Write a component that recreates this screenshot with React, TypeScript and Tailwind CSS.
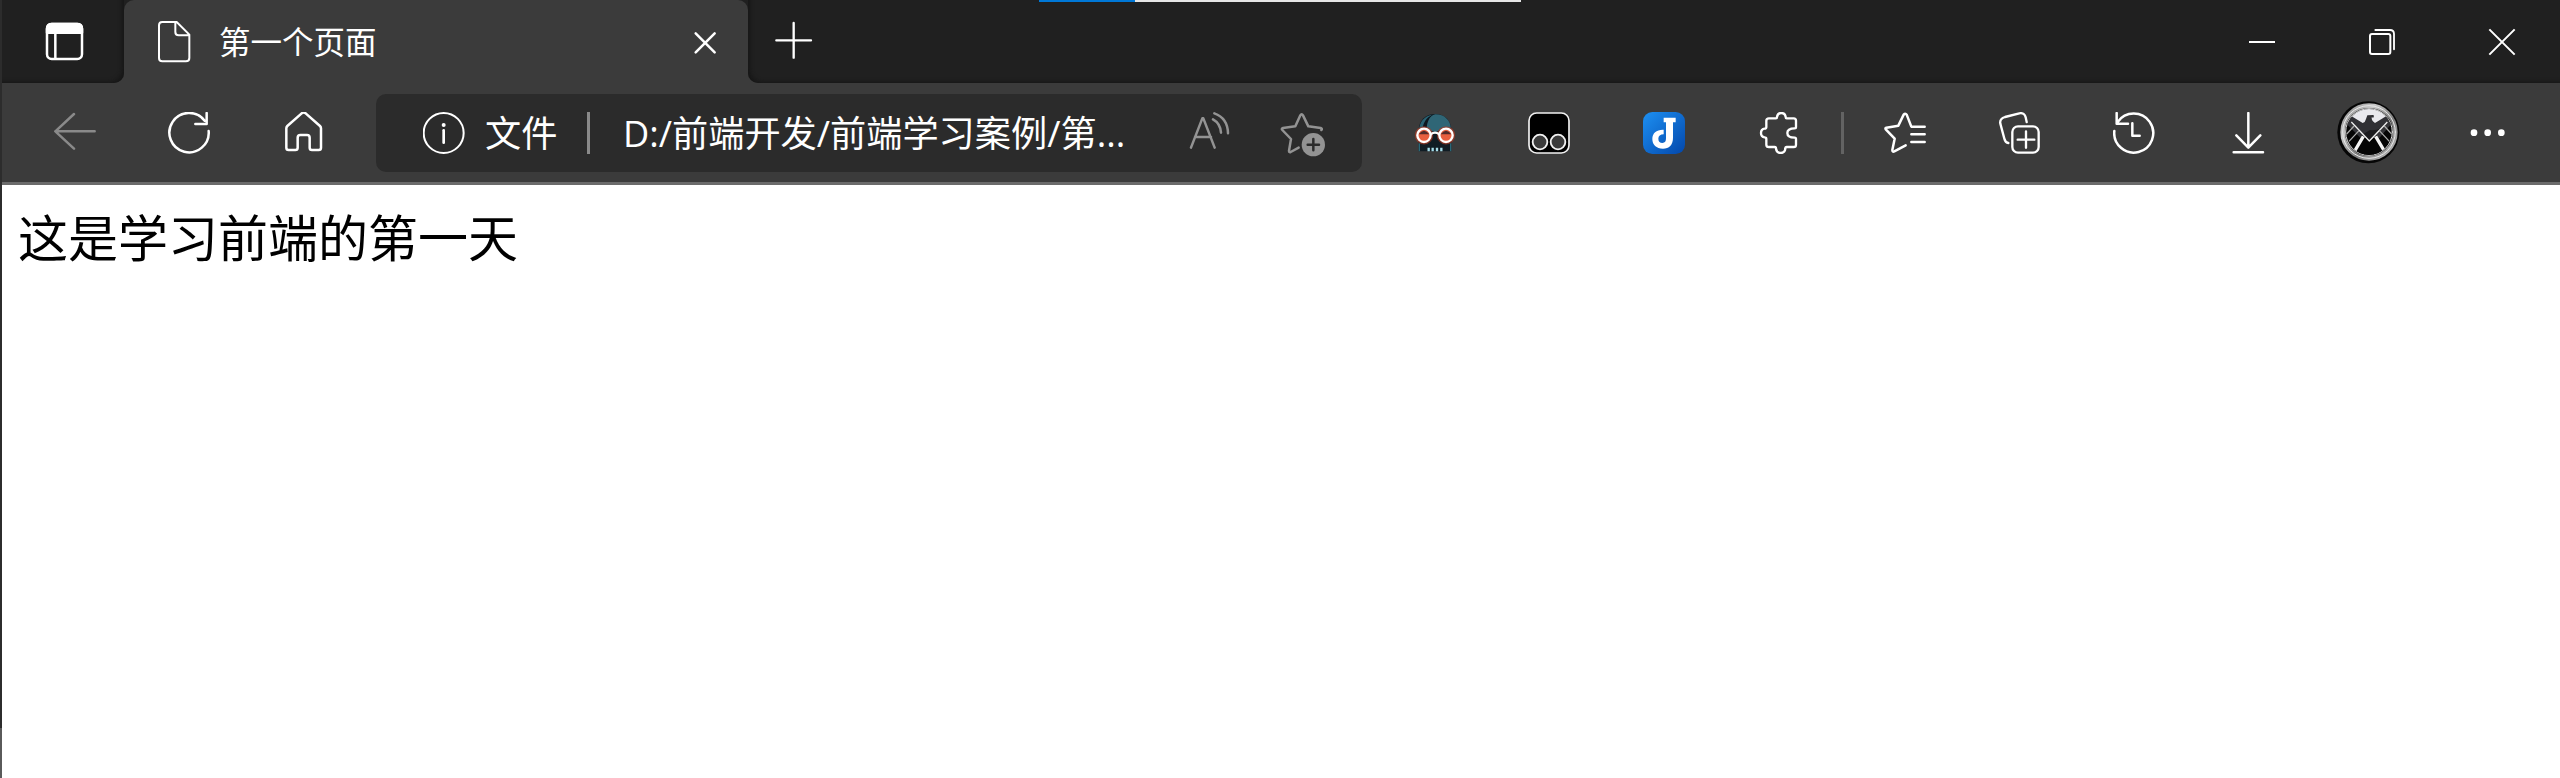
import type { ReactNode } from 'react';

type IconProps = {
  box: string;
  className?: string;
  children: ReactNode;
};

function Icon({ box, className = 'h-[42px] w-[42px] text-white', children }: IconProps) {
  return (
    <svg
      viewBox={box}
      className={`block ${className}`}
      fill="none"
      stroke="currentColor"
      strokeWidth={7.5}
      strokeLinecap="round"
      strokeLinejoin="round"
    >
      {children}
    </svg>
  );
}

function TabStrip() {
  return (
    <div className="flex h-[83px] bg-[#3b3b3b]">
      <div className="flex w-[122px] rounded-br-[10px] bg-[#202020] pt-[20px] pl-[42px] shadow-[inset_-4px_-3px_4px_-2px_#161616]">
        <Icon box="132 60 126 126">
          <rect x="141" y="72" width="105" height="105" rx="14" />
          <path d="M141 98V86q0-14 14-14h77q14 0 14 14v12z" fill="currentColor" />
          <path d="M166 100v76" />
        </Icon>
      </div>

      <div className="w-[624px] bg-linear-to-b from-[#202020] from-50% to-[#3b3b3b] to-50%">
        <div className="flex h-full items-start rounded-t-[10px] bg-[#3b3b3b] pt-[20px] pl-[32px]">
          <Icon box="468 60 108 129" className="h-[43px] w-[36px] text-white">
            <path
              strokeWidth={6}
              d="M487 66h43l38 38v70q0 10-10 10h-71q-10 0-10-10V76q0-10 10-10zM526 67v29q0 10 10 10h31"
            />
          </Icon>
          <div className="ml-[27px] w-[473px] font-['Noto_Sans_CJK_SC',sans-serif] text-[31.5px] leading-[40px] whitespace-nowrap text-white">
            第一个页面
          </div>
          <Icon box="876 90 78 78" className="mt-[10px] h-[26px] w-[26px] text-white">
            <path d="M887 100l57 57M944 100l-57 57" />
          </Icon>
        </div>
      </div>

      <div className="flex flex-1 items-start rounded-bl-[10px] bg-[#202020] pl-[27px] shadow-[inset_4px_-3px_4px_-2px_#161616]">
        <Icon box="1125 60 114 120" className="mt-[20px] h-[40px] w-[38px] text-white">
          <path d="M1129 121h104M1181 69v104" strokeWidth={7} />
        </Icon>
        <div className="ml-[226px] flex h-[2px] w-[482px] bg-[#e6e6e6]">
          <div className="w-[96px] bg-[#0078d7]" />
        </div>
        <div className="ml-auto flex items-center gap-[92px] pt-[28px] pr-[44px]">
          <Icon box="144 84 84 84" className="h-[28px] w-[28px] text-white">
            <path d="M147 126h78" strokeWidth={6} strokeLinecap="butt" />
          </Icon>
          <Icon box="501 84 84 84" className="h-[28px] w-[28px] text-white">
            <rect x="507" y="102" width="61" height="60" rx="6" strokeWidth={6} />
            <path d="M523 90h44q12 0 12 12v46" strokeWidth={5.5} />
          </Icon>
          <Icon box="861 84 84 84" className="h-[28px] w-[28px] text-white">
            <path d="M865 88l76 76M941 88l-76 76" strokeWidth={6} strokeLinecap="butt" />
          </Icon>
        </div>
      </div>
    </div>
  );
}

function AddressBar() {
  return (
    <div className="ml-[52px] flex h-[78px] w-[986px] items-center rounded-[10px] bg-[#2b2b2b] pl-[47px] font-['Open_Sans','Noto_Sans_CJK_SC',sans-serif] text-[36.2px] leading-[42px] text-white">
      <Icon box="69 336 126 126">
        <circle cx="131" cy="399" r="60" strokeWidth={6} />
        <path d="M131 391v37" strokeWidth={8} />
        <circle cx="131" cy="375" r="6" fill="currentColor" stroke="none" />
      </Icon>
      <div className="ml-[20px] w-[102px] whitespace-nowrap">文件</div>
      <div className="h-[42px] w-[3px] bg-[#8a8a8a]" />
      <div className="ml-[33px] w-[565px] whitespace-nowrap">D:/前端开发/前端学习案例/第...</div>
      <Icon box="144 336 126 126" className="h-[42px] w-[42px] text-[#939393]">
        <path d="M153 443l34-88h3l34 88M165 411h48M219 358q22 12 24 40M223 340q40 14 41 60" />
      </Icon>
      <Icon box="420 327 144 144" className="ml-[50px] h-[48px] w-[48px] text-[#939393]">
        <path d="M476 443l-24 13q-5 2-5-4l6-35-26-27q-4-4 2-6l37-5 15-33q4-7 8 0l16 33 37 5q6 2 2 6" />
        <circle cx="520" cy="434" r="35" fill="currentColor" stroke="none" />
        <path d="M503 434h34M520 417v34" stroke="#2b2b2b" />
      </Icon>
    </div>
  );
}

function SkullIcon() {
  return (
    <Icon box="132 96 126 126" className="ml-[52px] h-[42px] w-[42px] text-white">
      <path d="M146 214v-62c0-32 22-50 49-50s49 18 49 50v62z" fill="#101c24" stroke="none" />
      <path d="M166 150c0-26 12-42 30-47 28 0 46 18 47 45l-20-6-24 14z" fill="#2f6676" stroke="none" />
      <path d="M148 150c0-26 16-42 38-46-16 12-20 24-24 40z" fill="#2a6272" stroke="none" />
      <path d="M158 148c1-20 12-36 28-42-12 12-15 26-16 40z" fill="#0d1820" stroke="none" />
      <path d="M148 190v24M242 190v24" stroke="#2a6878" strokeWidth={4} strokeLinecap="butt" />
      <g stroke="#b33a22" strokeWidth={13} opacity={0.65}>
        <circle cx="162" cy="166" r="21" />
        <circle cx="228" cy="166" r="21" />
      </g>
      <circle cx="162" cy="166" r="20" fill="#e8603f" strokeWidth={7} />
      <circle cx="228" cy="166" r="20" fill="#e8603f" strokeWidth={7} />
      <path d="M146 163q16-22 32 0zM212 163q16-22 32 0z" fill="#542c2a" stroke="none" />
      <path d="M183 162q12-8 24 0" strokeWidth={7} />
      <path d="M176 203v11M188 203v11M201 203v11M214 203v11" stroke="#a5dce8" strokeWidth={7} strokeLinecap="butt" />
    </Icon>
  );
}

function AvatarIcon() {
  return (
    <Icon box="411 303 192 192" className="ml-[68px] h-[64px] w-[64px] text-white">
      <defs>
        <linearGradient id="ring" x1="0" y1="0" x2="1" y2="1">
          <stop offset="0" stopColor="#8a8a8a" />
          <stop offset="0.3" stopColor="#c9c9c9" />
          <stop offset="0.6" stopColor="#7a7a7a" />
          <stop offset="1" stopColor="#c4c4c4" />
        </linearGradient>
        <clipPath id="emblem">
          <circle cx="507" cy="396" r="69" />
        </clipPath>
      </defs>
      <circle cx="505" cy="397" r="93" fill="#060606" stroke="none" />
      <circle cx="507" cy="396" r="79" stroke="url(#ring)" strokeWidth={14} />
      <circle cx="507" cy="396" r="79" stroke="#e8e8e8" strokeWidth={3} />
      <circle cx="507" cy="396" r="70" fill="#050505" stroke="#dddddd" strokeWidth={3} />
      <g clipPath="url(#emblem)" stroke="none">
        <path d="M450 352l57 30 57-30-12-30h-90z" fill="#e9e9ee" />
        <path d="M440 372l8-24 42 24 20 60-26-16z" fill="#343438" />
        <path d="M574 372l-8-24-42 24-14 60 26-16z" fill="#343438" />
        <path d="M450 346l38 23q8-2 10-12l4-11 18-1q4 2 0 8l-5-1q-1 11 10 17l38-23-3 22-53 55-54-55z" fill="#303035" />
        <path d="M564 362q-20 32-54 28l-20 12 18 21z" fill="#1b1b1e" />
        <path d="M508 423l-22-18-30 50 20 20h62l22-20-30-50z" fill="#050505" />
        <g fill="none" strokeLinecap="butt">
          <path d="M454 366l54 57 54-57" stroke="#eeeeee" strokeWidth={4} />
          <path d="M490 409l-26 44M527 409l26 44" stroke="#f4f4f4" strokeWidth={10} />
          <path d="M440 402l22-24M447 424l30-32M575 402l-22-24M568 424l-30-32" stroke="#aaaaaa" strokeWidth={4} />
        </g>
      </g>
    </Icon>
  );
}

function Toolbar() {
  return (
    <div className="flex h-[102px] items-start border-b-[3px] border-[#6b6b6b] bg-[#3b3b3b] pt-[11px]">
      <div className="flex h-[78px] items-center">
        <Icon box="162 336 126 126" className="ml-[52px] h-[42px] w-[42px] text-[#8a8a8a]">
          <path d="M222 342l-56 52 56 52M166 394h118" strokeWidth={7.5} />
        </Icon>
        <Icon box="504 336 126 126" className="ml-[72px] h-[42px] w-[42px] text-white">
          <path d="M626 393A59 59 0 1 1 614 362M620 339v33h-34" />
        </Icon>
        <Icon box="846 336 126 126" className="ml-[72px] h-[42px] w-[42px] text-white">
          <path d="M859 385q0-4 3-7l43-38q6-5 12 0l43 38q3 3 3 7v58q0 7-7 7h-20q-7 0-7-7v-30q0-8-8-8h-20q-8 0-8 8v30q0 7-7 7h-20q-7 0-7-7z" />
        </Icon>

        <AddressBar />

        <SkullIcon />
        <Icon box="474 96 126 126" className="ml-[72px] h-[42px] w-[42px] text-[#f2f2f2]">
          <rect x="477" y="99" width="120" height="120" rx="23" fill="#000000" strokeWidth={5} />
          <circle cx="510" cy="186" r="22" fill="#3b3b3b" strokeWidth={5.5} />
          <circle cx="564" cy="186" r="22" fill="#3b3b3b" strokeWidth={5.5} />
        </Icon>
        <Icon box="819 96 126 126" className="ml-[73px] h-[42px] w-[42px] text-white">
          <defs>
            <linearGradient id="note" x1="0" y1="0" x2="1" y2="1">
              <stop offset="0" stopColor="#1d90f2" />
              <stop offset="1" stopColor="#0347ab" />
            </linearGradient>
          </defs>
          <rect x="819" y="96" width="126" height="126" rx="28" fill="url(#note)" stroke="none" />
          <path
            d="M881 113h36v14h-8v46c0 22-12 33-30 33-20 0-32-12-32-29 0-18 13-29 34-28v14c-10 0-16 5-16 13 0 9 5 13 12 13 8 0 11-5 11-14v-48h-7z"
            fill="currentColor"
            stroke="none"
          />
        </Icon>
        <Icon box="174 96 126 126" className="ml-[73px] h-[42px] w-[42px] text-white">
          <path
            strokeWidth={7}
            d="M207 115h21c3 0 3-2 3-4 1-7 6-12 13-12s12 5 13 12c0 2 0 4 3 4h21q7 0 7 7v19c0 3-1 4-4 4-14 0-22 6-22 14s8 14 22 14c3 0 4 1 4 4v17q0 7-7 7h-21c-3 0-4 1-4 5-1 8-6 13-14 13s-13-5-14-13c0-4-1-5-4-5h-17q-8 0-8-7v-17c0-4-2-5-5-5-7-1-11-6-11-13s4-12 11-13c3 0 5-1 5-5v-19q0-7 8-7z"
          />
        </Icon>
        <div className="ml-[41px] h-[42px] w-[3px] bg-[#636363]" />
        <Icon box="552 96 126 126" className="ml-[40px] h-[42px] w-[42px] text-white">
          <path d="M674 140h-40l-14-36q-4-6-9 0l-16 33-36 6q-5 1-1 6l26 27-7 34q0 7 6 4l34-18M634 163h40M634 186h40" />
        </Icon>
        <Icon box="894 96 126 126" className="ml-[72px] h-[42px] w-[42px] text-white">
          <rect x="937" y="139" width="79" height="79" rx="17" strokeWidth={7} />
          <path d="M978 154v49M953 179h50M980 126l-3-14q-4-15-19-12l-43 11q-17 5-14 20l12 45q3 12 12 13" strokeWidth={7} />
        </Icon>
        <Icon box="219 96 126 126" className="ml-[73px] h-[42px] w-[42px] text-white">
          <path d="M223 153A58.500 58.500 0 1 0 233 126M230 99v32h34M277 130v37h22" />
        </Icon>
        <Icon box="561 96 126 126" className="ml-[72px] h-[42px] w-[42px] text-white">
          <path d="M625 99v103M589 166l36 37 36-37M581 217h88" />
        </Icon>
        <AvatarIcon />
        <Icon box="801 336 126 126" className="ml-[66px] h-[42px] w-[42px] text-white">
          <g fill="currentColor" stroke="none">
            <circle cx="822" cy="398" r="10" />
            <circle cx="863" cy="398" r="10" />
            <circle cx="904" cy="398" r="10" />
          </g>
        </Icon>
      </div>
    </div>
  );
}

export default function App() {
  return (
    <div className="flex h-[778px] w-[2560px] overflow-hidden bg-white">
      <div className="flex w-[2px] flex-col bg-[#2c2c2c]">
        <div className="mt-auto h-[50px] bg-[#5a5a5a]" />
      </div>
      <div className="w-[2558px]">
        <TabStrip />
        <Toolbar />
        <main className="pt-[14px] pl-[16px] font-['Noto_Sans_CJK_SC',sans-serif] text-[50px] leading-[72px] text-black">
          这是学习前端的第一天
        </main>
      </div>
    </div>
  );
}
